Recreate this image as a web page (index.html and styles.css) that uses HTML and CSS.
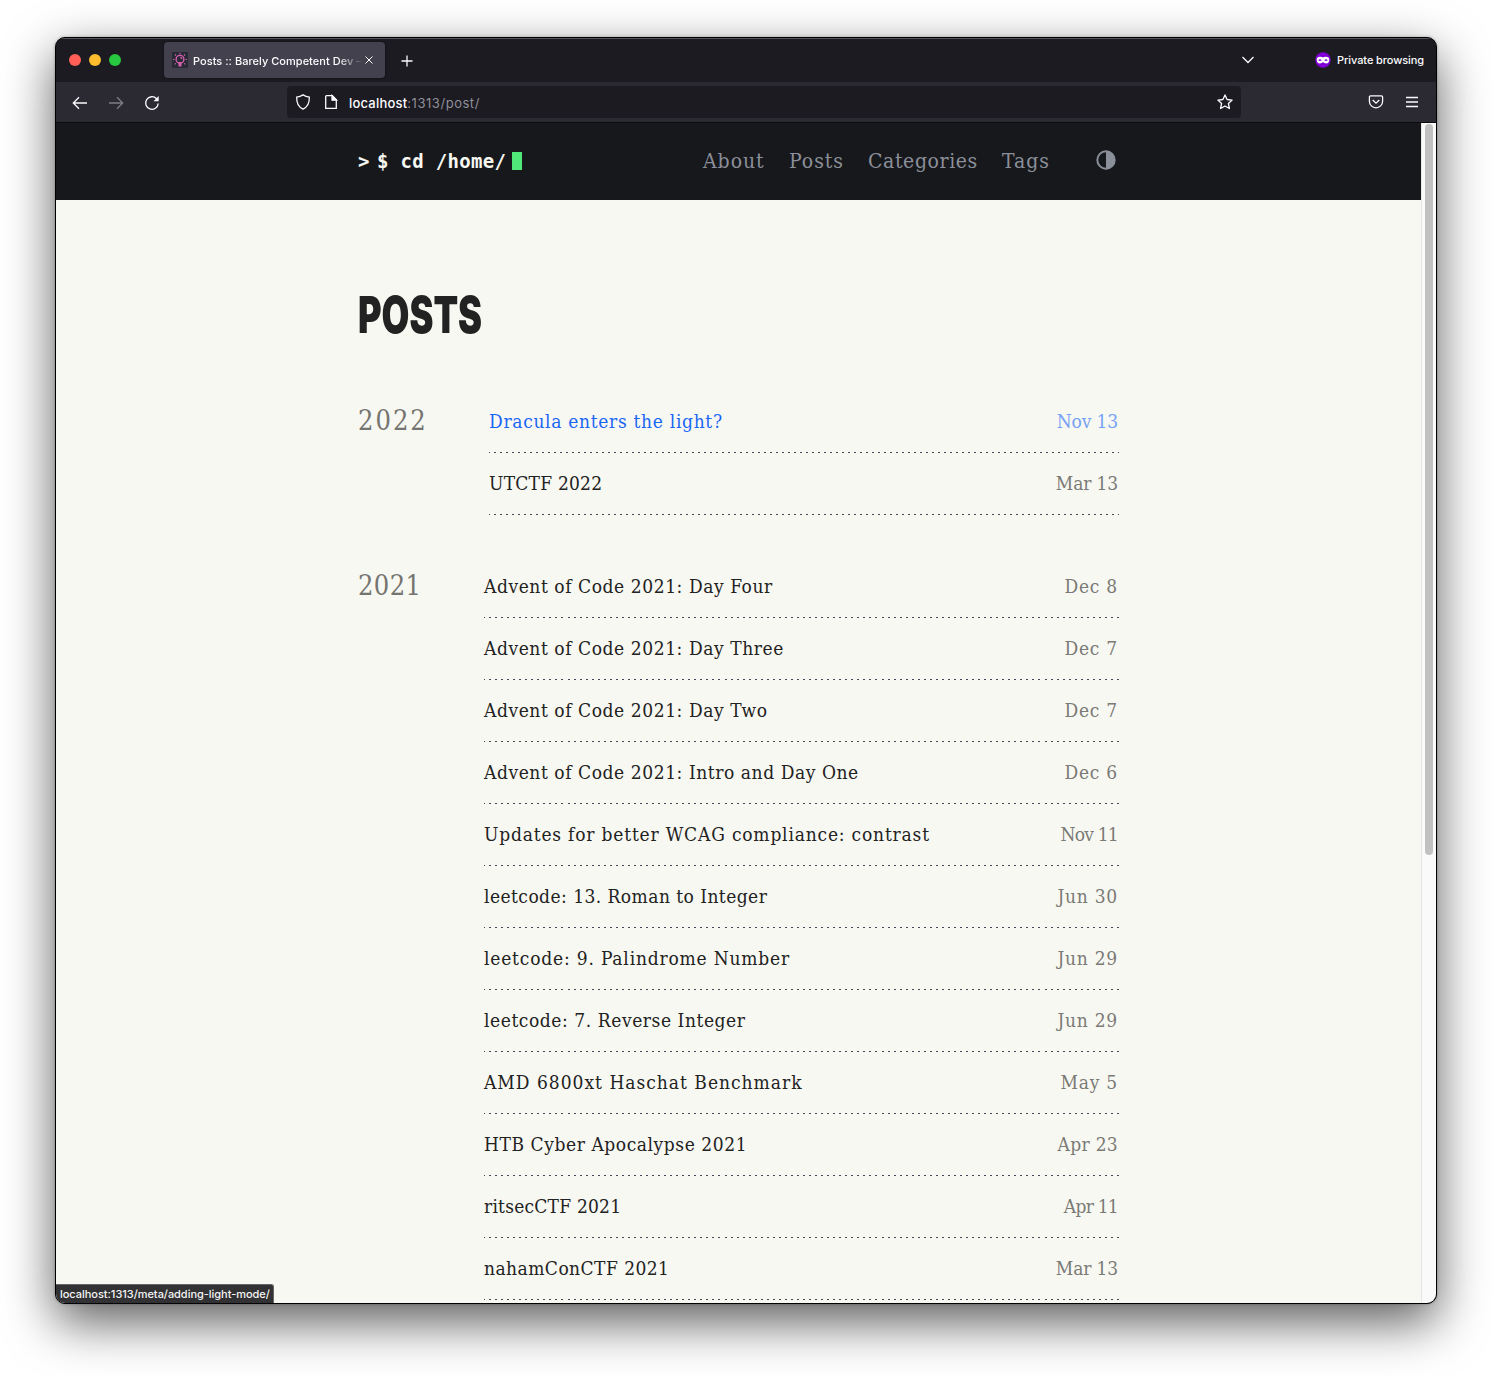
FILE: index.html
```html
<!DOCTYPE html>
<html lang="en">
<head>
<meta charset="utf-8">
<title>Posts :: Barely Competent Dev</title>
<link rel="stylesheet" href="styles.css">
</head>
<body>
<div class="window">
  <div class="tabbar">
    <div class="lights"><i class="red"></i><i class="yellow"></i><i class="green"></i></div>
    <div class="tab">
      <svg class="favicon" viewBox="0 0 16 16"><rect width="16" height="16" rx="1" fill="#282a36"/><g fill="none" stroke="#d65fae" stroke-width="1.4"><circle cx="8" cy="7.300" r="3.900"/><path d="M6.500 10.800h3M6.500 12.300h3M6.500 13.800h3M8.200 5.400a1.800 1.800 0 0 1 1.600 1.600"/><path d="M8 .8v1.400M3 2.500l1 1M13 2.500l-1 1M1 7.500h1.400M13.600 7.500H15M2.700 12.300l1-1M13.300 12.300l-1-1" stroke-width="1.100"/></g></svg>
      <span class="tab-title">Posts :: Barely Competent Dev –</span>
      <svg class="close" viewBox="0 0 8 8"><path d="M.5.5l7 7M7.5.5l-7 7"/></svg>
    </div>
    <svg class="plus" viewBox="0 0 12 12"><path d="M6 .5v11M.5 6h11"/></svg>
    <svg class="chevron" viewBox="0 0 12 8"><path d="M.5 1L6 6.5 11.5 1"/></svg>
    <svg class="mask" viewBox="0 0 16 16"><circle cx="8" cy="8" r="7.7" fill="#8000d7"/><path fill="#fff" fill-rule="evenodd" d="M1.7 7.5C1.7 5.5 3 4.7 4.8 4.7c1.500 0 2.200.5 3.200.5s1.700-.5 3.200-.5c1.800 0 3.100.8 3.100 2.800 0 2.500-1.300 4.100-3.200 4.100C9.400 11.600 9 10.300 8 10.300s-1.400 1.300-3.100 1.300c-1.900 0-3.200-1.600-3.200-4.100zM3.300 8.200c.8 1.100 2.500 1.100 3.400 0-.9-1.300-2.600-1.300-3.400 0zm6 0c.9 1.100 2.600 1.100 3.400 0-.8-1.300-2.500-1.300-3.400 0z"/></svg>
    <span class="private">Private browsing</span>
  </div>
  <div class="toolbar">
    <div class="nav-buttons">
      <svg viewBox="0 0 16 16"><path d="M15 8H1.500M7 2.300L1.300 8 7 13.700"/></svg>
      <svg class="dim" viewBox="0 0 16 16"><path d="M1 8h13.500M9 2.300L14.700 8 9 13.700"/></svg>
      <svg viewBox="0 0 16 16"><path d="M14.200 8.500A6.300 6.300 0 1 1 12.600 3.800l1.200 1.300"/><path d="M14.700 1v5.200H9.500z" fill="#fbfbfe" stroke="none"/></svg>
    </div>
    <div class="urlbar">
      <svg viewBox="0 0 16 16"><path d="M8 .9c2 1.300 4 2 6.300 2.200.3 5.700-1.500 9.700-6.300 12C3.200 12.800 1.400 8.800 1.700 3.100 4 2.900 6 2.200 8 .9z"/></svg>
      <svg class="doc" viewBox="0 0 16 16"><path d="M3.600 1.700h5.700l4 4v8.600H2.700V2.600c0-.5.400-.9.900-.9z"/><path d="M9 1.500v4.700h4.500z" fill="#fbfbfe"/></svg>
      <span class="url"><b>localhost</b>:1313/post/</span>
      <svg class="star" viewBox="0 0 16 16"><path stroke-linejoin="round" d="M8 .9l2.100 4.600 5 .6-3.700 3.400 1 5L8 12l-4.400 2.500 1-5L.9 6.100l5-.6z"/></svg>
    </div>
    <svg class="pocket" viewBox="0 0 16 16"><path d="M2.600 1.800h10.800c.7 0 1.200.5 1.200 1.200v4.200a6.600 6.600 0 0 1-13.200 0V3c0-.7.500-1.200 1.200-1.200z"/><path d="M4.700 6L8 9.200 11.300 6"/></svg>
    <svg class="menu" viewBox="0 0 12 12"><path d="M0 1.500h12M0 6h12M0 10.500h12"/></svg>
  </div>
  <div class="view">
    <div class="page">
      <header class="site-header">
        <a class="logo"><span class="prompt">&gt;</span><span class="command">$ cd /home/</span><i class="cursor"></i></a>
        <nav class="site-nav"><a class="about">About</a><a class="posts">Posts</a><a class="categories">Categories</a><a class="tags">Tags</a></nav>
        <svg class="theme" viewBox="0 0 20 20"><circle cx="10" cy="10" r="8.700" fill="none" stroke="#8b8f99" stroke-width="2"/><path d="M10 1a9 9 0 0 1 0 18z" fill="#8b8f99"/></svg>
      </header>
      <main>
        <h1><span>POSTS</span></h1>
        <section class="year y2022">
          <h2>2022</h2>
          <ul>
            <li class="hover"><a>Dracula enters the light?</a><time>Nov 13</time></li>
            <li class="tight"><a>UTCTF 2022</a><time>Mar 13</time></li>
          </ul>
        </section>
        <section class="year y2021">
          <h2>2021</h2>
          <ul>
            <li><a>Advent of Code 2021: Day Four</a><time class="roomy">Dec 8</time></li>
            <li><a>Advent of Code 2021: Day Three</a><time class="roomy">Dec 7</time></li>
            <li><a>Advent of Code 2021: Day Two</a><time class="roomy">Dec 7</time></li>
            <li><a>Advent of Code 2021: Intro and Day One</a><time class="roomy">Dec 6</time></li>
            <li class="wide"><a>Updates for better WCAG compliance: contrast</a><time class="narrow">Nov 11</time></li>
            <li class="numbered"><a>leetcode: 13. Roman to Integer</a><time class="roomy">Jun 30</time></li>
            <li class="wide"><a>leetcode: 9. Palindrome Number</a><time class="roomy">Jun 29</time></li>
            <li><a>leetcode: 7. Reverse Integer</a><time class="roomy">Jun 29</time></li>
            <li class="wider"><a>AMD 6800xt Haschat Benchmark</a><time class="roomy">May 5</time></li>
            <li><a>HTB Cyber Apocalypse 2021</a><time class="plain">Apr 23</time></li>
            <li class="tight"><a>ritsecCTF 2021</a><time class="narrow">Apr 11</time></li>
            <li class="numbered"><a>nahamConCTF 2021</a><time>Mar 13</time></li>
          </ul>
        </section>
      </main>
    </div>
    <div class="scrollbar"><i></i></div>
    <div class="status">localhost:1313/meta/adding-light-mode/</div>
  </div>
</div>
</body>
</html>
```
FILE: styles.css
```css
* { box-sizing: border-box; }
html, body { margin: 0; height: 1377px; overflow: hidden; background: #fff; }
body { padding: 37px 55px; font-family: Inter, sans-serif; }
svg { display: block; flex: none; fill: none; stroke: #fbfbfe; stroke-width: 1.3; overflow: visible; }
ul, h1, h2 { margin: 0; padding: 0; font-weight: 400; list-style: none; }

.window {
  width: 1382px; height: 1267px; border: 1px solid #000; border-radius: 10px;
  overflow: hidden; display: flex; flex-direction: column; background: #1c1b22;
  box-shadow: 0 18px 50px rgba(0,0,0,.64), 0 0 3px rgba(0,0,0,.3);
}

.tabbar { height: 44px; flex: none; display: flex; align-items: center; box-shadow: inset 0 1px #55545a; padding-left: 13px; color: #fbfbfe; font-size: 11px; font-weight: 500; }
.lights { display: flex; gap: 8px; width: 95px; }
.lights i { width: 12px; height: 12px; border-radius: 50%; }
.red { background: #ff5f57; }
.yellow { background: #febc2e; }
.green { background: #28c840; }
.tab { width: 221px; height: 36px; border-radius: 4px; background: #42414d; display: flex; align-items: center; padding-left: 8px; box-shadow: 0 0 3px rgba(0,0,0,.5); }
.favicon { width: 16px; height: 16px; stroke: none; }
.tab-title { width: 170px; margin-left: 5px; padding-top: 1px; white-space: nowrap; letter-spacing: .03px; mask-image: linear-gradient(to right, #000 145px, transparent 170px); }
.close { width: 8px; height: 8px; margin-left: 2px; stroke-width: 1; }
.plus { width: 12px; height: 12px; margin: 1px 0 0 16px; }
.chevron { width: 12px; height: 8px; margin-left: 829px; }
.mask { width: 16px; height: 16px; margin-left: 61px; stroke: none; }
.private { margin-left: 6px; white-space: nowrap; letter-spacing: -.08px; }

.toolbar { height: 41px; flex: none; background: #2b2a33; border-bottom: 1px solid #0c0c0d; display: flex; align-items: center; padding-left: 16px; }
.nav-buttons { display: flex; gap: 20px; width: 215px; padding-top: 1px; }
.nav-buttons svg, .urlbar svg, .pocket { width: 16px; height: 16px; }
.nav-buttons .dim { opacity: .4; }
.urlbar { width: 954px; height: 32px; border-radius: 4px; background: #1c1b22; display: flex; align-items: center; padding: 0 8px; }
.urlbar .doc { margin-left: 12px; }
.url { flex: 1; margin-left: 10px; font-size: 13px; color: #8f8f98; letter-spacing: .54px; padding-top: 2px; }
.url b { font-weight: 500; letter-spacing: .2px; color: #fbfbfe; }
.pocket { margin-left: 127px; }
.menu { width: 12px; height: 12px; margin-left: 22px; }

.view { flex: 1; min-height: 0; display: flex; position: relative; }
.page { width: 1365px; background: #f8f8f2; overflow: hidden; font-family: "DejaVu Serif Condensed", "DejaVu Serif", serif; font-stretch: condensed; }
.site-header { height: 77px; background: #17181c; display: flex; align-items: center; padding-left: 302px; }
.logo { width: 345px; display: flex; align-items: center; padding-bottom: 1px; font: 700 19px "DejaVu Sans Mono", monospace; color: #f8f8f2; letter-spacing: .3px; white-space: pre; }
.prompt { width: 19px; }
.command { width: 135px; }
.cursor { width: 10px; height: 18px; background: #50e878; }
.site-nav { display: flex; width: 393px; font-size: 21px; padding-bottom: 1px; letter-spacing: .95px; color: #8b8f99; white-space: nowrap; }
.about { width: 86px; }
.posts { width: 79px; }
.categories { width: 134px; letter-spacing: .6px; }
.theme { width: 20px; height: 20px; stroke: none; margin-top: -3px; }

main { padding: 84px 302px 0; color: #222; }
h1 { height: 107px; font: 900 51px/62px Inter, sans-serif; }
h1 span { display: inline-block; transform: scaleX(.705); transform-origin: 0 50%; }
.year { display: flex; justify-content: space-between; width: 761px; margin-bottom: 41px; }
.year h2 { font-size: 27px; line-height: 60px; letter-spacing: 2px; color: #747470; }
.y2022 ul { width: 630px; }
.y2021 ul { width: 635px; }
.y2021 h2 { letter-spacing: .4px; }
.year li {
  height: 62px; display: flex; justify-content: space-between; line-height: 60px; font-size: 19px; white-space: nowrap;
  background: repeating-linear-gradient(to right, #44475a 0 1px, transparent 1px 5px, #44475a 5px 6px) 0 100% / 100% 1px no-repeat;
}
.y2021 li {
  background-image: repeating-linear-gradient(to right, #44475a 0 1px, transparent 1px 5.038px, #44475a 5.038px 6.038px);
}
.year a { letter-spacing: .57px; }
.year .tight a { letter-spacing: .22px; }
.year .numbered a { letter-spacing: .45px; }
.year .wide a { letter-spacing: .81px; }
.year .wider a { letter-spacing: 1px; }
.year time { color: #7a7a76; letter-spacing: -.15px; padding-right: 1px; }
.year .plain { letter-spacing: .3px; }
.year .roomy { letter-spacing: .75px; }
.year .narrow { letter-spacing: -.75px; }
.year .hover a { color: #1a66f5; letter-spacing: .69px; }
.year .hover time { color: #75a2f5; }

.scrollbar { width: 15px; background: #fafafa; border-left: 1px solid #e6e6e6; padding: 1px 3px; }
.scrollbar i { display: block; width: 8px; height: 731px; border-radius: 4px; background: #c1c1c1; }
.status {
  position: absolute; left: 0; bottom: 0; width: 218px; height: 19px; background: #323234; color: #f5f5f5;
  border: 1px solid #666; border-width: 1px 1px 0 0; border-radius: 0 3px 0 0; padding-left: 4px;
  font-size: 11px; font-weight: 500; line-height: 19px; letter-spacing: -.03px; white-space: nowrap;
}
```
